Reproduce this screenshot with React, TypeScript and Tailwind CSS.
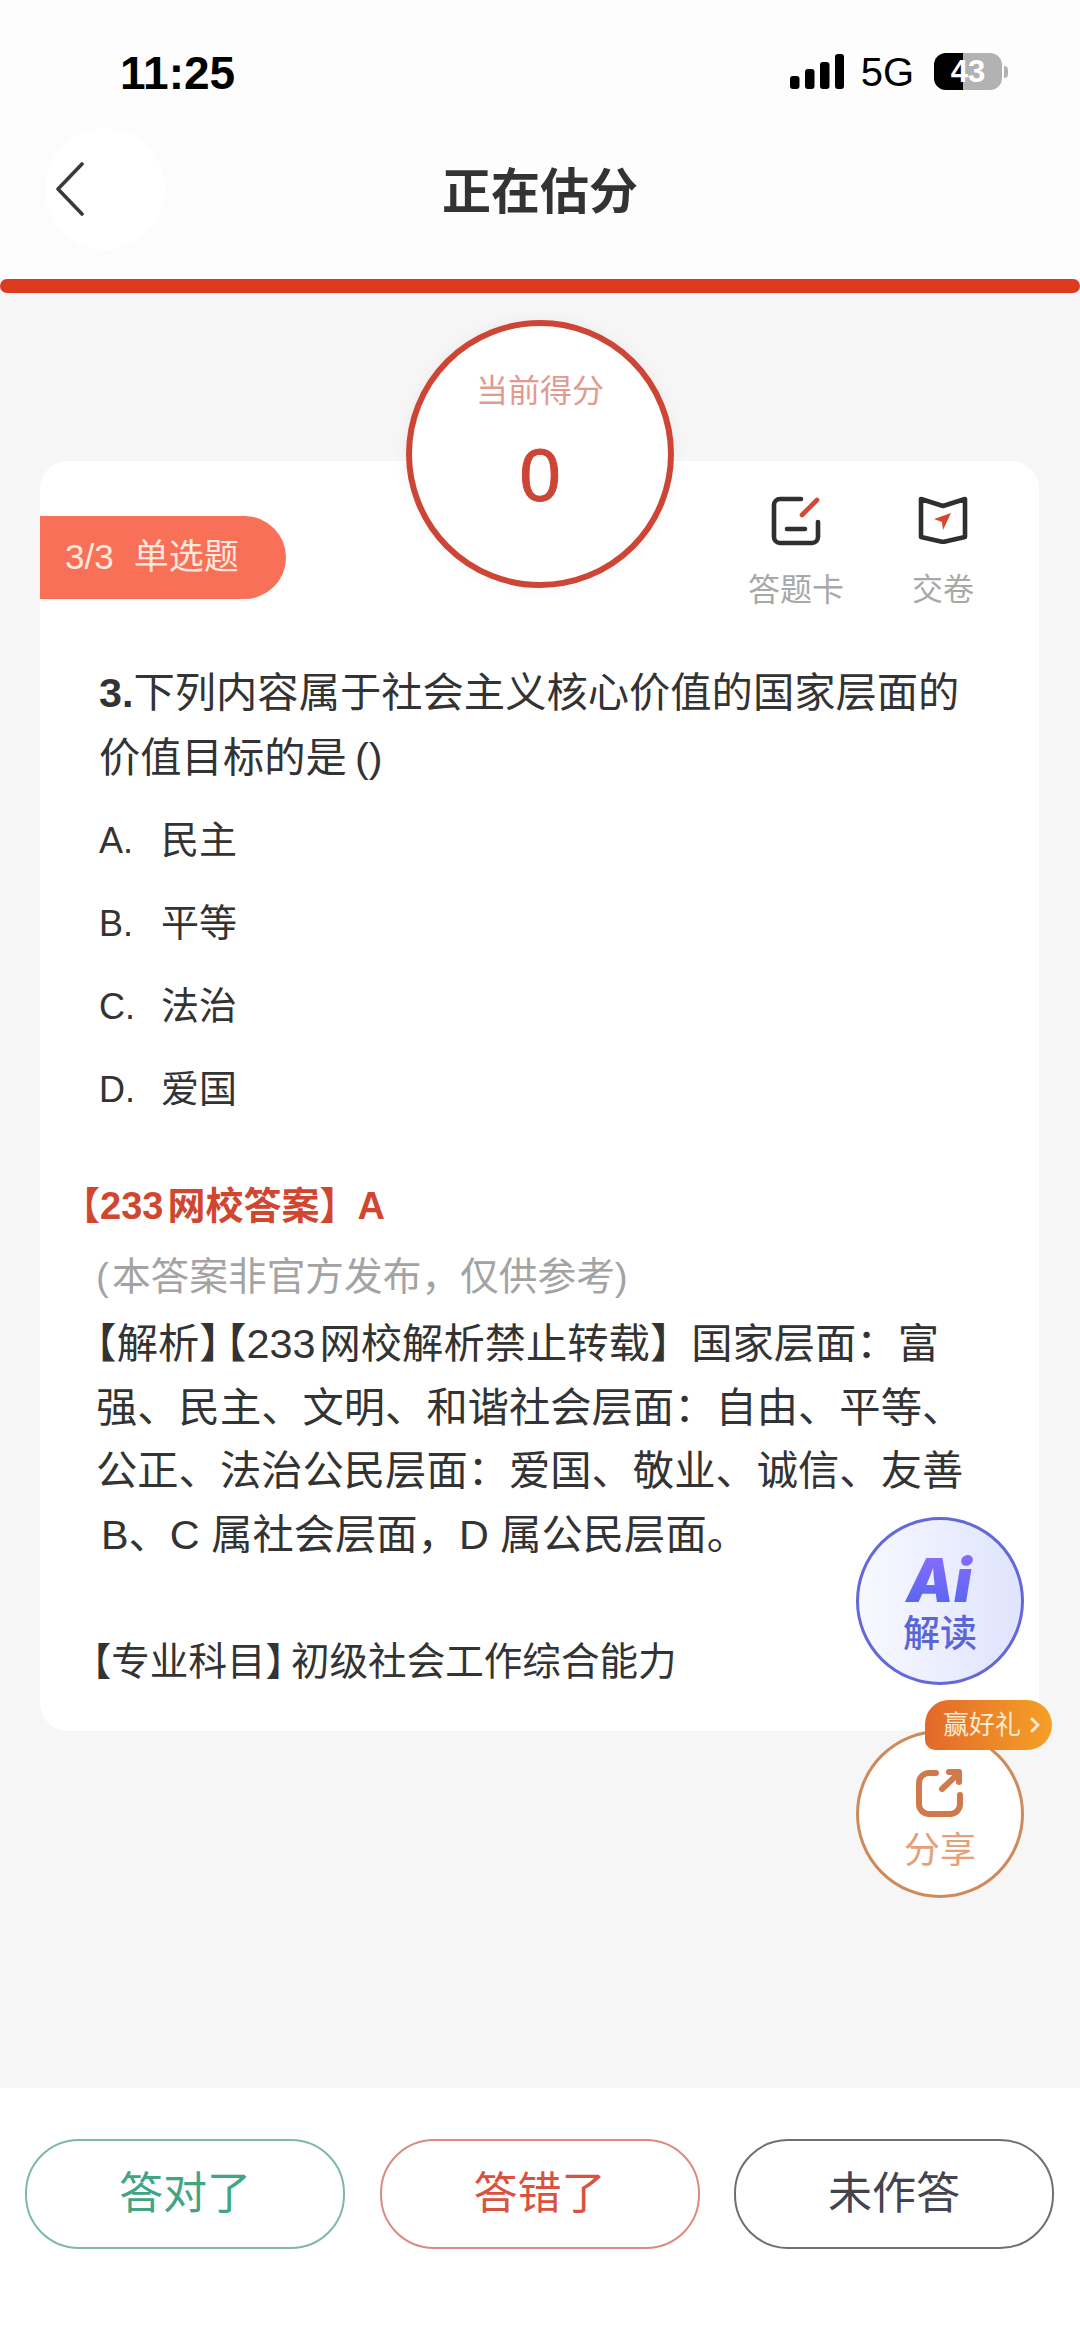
import React from "react";

const font = { fontFamily: '"Liberation Sans","Noto Sans CJK SC",sans-serif' };

function Signal() {
  return (
    <svg width="54" height="35" viewBox="0 0 54 35" fill="#000">
      <rect x="0" y="22" width="9.5" height="13" rx="3" />
      <rect x="15" y="15" width="9.5" height="20" rx="3" />
      <rect x="30" y="8" width="9.5" height="27" rx="3" />
      <rect x="45" y="0" width="9" height="35" rx="3" />
    </svg>
  );
}

function CardIcon() {
  return (
    <svg width="50" height="50" viewBox="0 0 50 50" fill="none" strokeWidth="4.6" strokeLinecap="round">
      <path d="M30 3H9a6 6 0 0 0-6 6v32a6 6 0 0 0 6 6h32a6 6 0 0 0 6-6V26" stroke="#2e2e33" />
      <path d="M16 33h18" stroke="#2e2e33" />
      <path d="M31 19L46 4" stroke="#d5472f" />
    </svg>
  );
}

function SubmitIcon() {
  return (
    <svg width="50" height="48" viewBox="0 0 50 48" fill="none">
      <path d="M3 3l22 7 22-7v38l-22 5-22-5z" stroke="#2e2e33" strokeWidth="4.6" strokeLinejoin="round" />
      <path d="M16 23l17-6-8 17-1-8z" fill="#d5472f" />
    </svg>
  );
}

function ShareIcon() {
  return (
    <svg width="50" height="50" viewBox="0 0 50 50" fill="none" stroke="#cf7a4c" strokeWidth="6" strokeLinecap="round" strokeLinejoin="round">
      <path d="M21 5H14A10 10 0 0 0 4 15v21a10 10 0 0 0 10 10h21a10 10 0 0 0 10-10v-9" />
      <path d="M27 21L44 5" />
      <path d="M34 4h10v10" />
    </svg>
  );
}

function Option({ letter, text }: { letter: string; text: string }) {
  return (
    <div className="flex h-[83px] items-center text-[36px] text-[#333]">
      <span className="w-[62px]">{letter}</span>
      <span className="text-[38px]">{text}</span>
    </div>
  );
}

function FooterButton({ label, text, border }: { label: string; text: string; border: string }) {
  return (
    <div className={`flex h-[110px] w-[320px] items-center justify-center rounded-[54px] border-2 text-[44px] ${text} ${border}`}>
      {label}
    </div>
  );
}

function Half({ children }: { children: React.ReactNode }) {
  return <span className="[font-feature-settings:'halt']">{children}</span>;
}

export default function App() {
  return (
    <div className="relative flex h-[2337px] w-[1080px] flex-col overflow-hidden bg-[#f6f6f6]" style={font}>
      <header className="bg-[#fdfdfd]">
        <div className="flex h-[128px] items-start justify-between pl-[120px] pr-[72px] pt-[48px]">
          <span className="text-[46px] font-bold leading-[50px] text-black">11:25</span>
          <div className="flex items-center pt-[5px]">
            <Signal />
            <span className="ml-[17px] text-[40px] leading-[36px] text-black">5G</span>
            <div className="relative ml-[20px] flex h-[37px] w-[68px] items-center justify-center overflow-hidden rounded-[12px] bg-[#b2b2b2]">
              <div className="absolute inset-y-0 left-0 w-[29px] bg-black" />
              <span className="relative text-[31px] font-bold leading-none text-white">43</span>
            </div>
            <div className="ml-[2px] h-[12px] w-[4px] rounded-r-full bg-[#b2b2b2]" />
          </div>
        </div>
        <div className="relative flex h-[151px] items-start justify-center">
          <div className="absolute left-[45px] top-[0px] flex h-[122px] w-[120px] items-center rounded-full bg-white pl-[10px] shadow-[0_0_40px_rgba(0,0,0,0.015)]">
            <svg width="30" height="54" viewBox="0 0 30 54" fill="none" stroke="#3a3a3a" strokeWidth="3.6" strokeLinecap="round" strokeLinejoin="round">
              <path d="M27 2L3 27l24 25" />
            </svg>
          </div>
          <h1 className="pt-[34px] text-[49px] font-bold leading-[60px] text-[#333]">正在估分</h1>
        </div>
      </header>
      <div className="h-[14px] rounded-full bg-[#de3a20]" />

      <main className="flex-1">
        <div className="relative z-10 mx-auto mb-[-127px] mt-[27px] flex h-[268px] w-[268px] flex-col items-center rounded-full border-[6px] border-[#cd4535] bg-white shadow-[0_0_14px_rgba(0,0,0,0.05)]">
          <span className="mt-[45px] text-[32px] leading-[40px] text-[#e29a8f]">当前得分</span>
          <span className="mt-[20px] text-[74px] leading-[90px] text-[#cd4535] [-webkit-text-stroke:1px_#cd4535]">0</span>
        </div>

        <section className="ml-[40px] h-[1270px] w-[999px] rounded-[28px] bg-white pt-[35px]">
          <div className="flex items-start justify-between pr-[65px]">
            <div className="mt-[20px] flex h-[83px] w-[246px] items-center rounded-r-[42px] bg-[#f87058] pl-[25px] text-[35px] text-[#ffe9df]">
              3/3<span className="ml-[20px]">单选题</span>
            </div>
            <div className="flex gap-[68px] text-[#a8a8a8]">
              <div className="flex flex-col items-center">
                <CardIcon />
                <span className="mt-[22px] text-[32px] leading-[44px]">答题卡</span>
              </div>
              <div className="flex flex-col items-center">
                <SubmitIcon />
                <span className="mt-[24px] text-[31px] leading-[44px]">交卷</span>
              </div>
            </div>
          </div>

          <div className="px-[59px] pt-[49px] text-[#333]">
            <p className="whitespace-nowrap text-[41.3px] leading-[65px]">
              <b>3.</b>下列内容属于社会主义核心价值的国家层面的
              <br />
              价值目标的是{"\u2009"}()
            </p>
            <div className="mt-[8px]">
              <Option letter="A." text="民主" />
              <Option letter="B." text="平等" />
              <Option letter="C." text="法治" />
              <Option letter="D." text="爱国" />
            </div>
          </div>

          <div className="pl-[22px] pt-[40px]">
            <p className="text-[38px] font-semibold leading-[70px] text-[#d0462f]">
              【233<span className="ml-[4px]">网校答案</span>】A
            </p>
            <p className="ml-[34px] mt-[1px] text-[38.7px] leading-[70px] text-[#a3a3a3]">
              (<span className="ml-[3px]">本答案非官方发布，仅供参考</span>)
            </p>
            <div className="ml-[34px] mt-[1px] whitespace-nowrap text-[41.3px] leading-[63.5px] text-[#333]">
              <p>
                <Half>【</Half>解析<Half>】</Half>
                <span className="ml-[6px]">
                  <Half>【</Half>
                </span>
                233<span className="ml-[4px]">网校解析禁止转载</span>】国家层面：富
              </p>
              <p>强、民主、文明、和谐社会层面：自由、平等、</p>
              <p>公正、法治公民层面：爱国、敬业、诚信、友善</p>
              <p className="ml-[5px]">B、C 属社会层面，D 属公民层面。</p>
              <p className="ml-[-4px] mt-[63px] text-[38.6px]">
                <Half>【</Half>专业科目<Half>】</Half>
                <span className="ml-[6px]">初级社会工作综合能力</span>
              </p>
            </div>
          </div>
        </section>
      </main>

      <footer className="flex h-[249px] items-start justify-between bg-white pl-[25px] pr-[26px] pt-[51px]">
        <FooterButton label="答对了" text="text-[#41a583]" border="border-[#7db9a5]" />
        <FooterButton label="答错了" text="text-[#d9523f]" border="border-[#dc8a80]" />
        <FooterButton label="未作答" text="text-[#44444f]" border="border-[#6e6e76]" />
      </footer>

      <div className="absolute left-[856px] top-[1517px] flex h-[168px] w-[168px] flex-col items-center rounded-full border-[3px] border-[#6468d8] bg-gradient-to-r from-[#f8f9ff] to-[#dfe4fd]">
        <span className="mt-[27px] bg-gradient-to-b from-[#8f6cff] to-[#4c66ee] bg-clip-text pl-[4px] pr-[6px] text-[60px] font-black italic leading-[66px] text-transparent" style={{ fontFamily: "Inter, sans-serif" }}>
          Ai
        </span>
        <span className="text-[37px] font-medium leading-[44px] text-[#5a66d8]">解读</span>
      </div>

      <div className="absolute left-[856px] top-[1730px] flex h-[168px] w-[168px] flex-col items-center rounded-full border-[3px] border-[#cf8a5c] bg-white pt-[35px]">
        <ShareIcon />
        <span className="mt-[11px] text-[36px] leading-[44px] text-[#e3a179]">分享</span>
      </div>
      <div className="absolute left-[925px] top-[1700px] flex h-[50px] w-[127px] items-center rounded-bl-[10px] rounded-br-[25px] rounded-tl-[24px] rounded-tr-[25px] bg-gradient-to-r from-[#e2682a] to-[#f5a025] pl-[18px] text-[26px] text-[#fdeacf]">
        赢好礼
        <svg className="ml-[8px]" width="12" height="16" viewBox="0 0 12 16" fill="none" stroke="#fdeacf" strokeWidth="3" strokeLinecap="round" strokeLinejoin="round">
          <path d="M3 2l6 6-6 6" />
        </svg>
      </div>
    </div>
  );
}
